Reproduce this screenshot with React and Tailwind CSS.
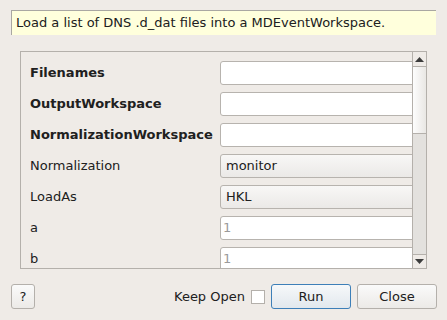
import React from "react";

const font = { fontFamily: '"DejaVu Sans", "Noto Sans", sans-serif' };

function Row({ label, bold, children }) {
  return (
    <div className="flex items-center h-[24px]">
      <div className={`w-[190px] shrink-0 text-[13px] text-[#202020] ${bold ? "font-bold" : ""}`}>{label}</div>
      <div className="flex-1 h-[24px]">{children}</div>
    </div>
  );
}

function Input({ value, placeholder }) {
  return (
    <div className="h-[24px] w-[200px] rounded-[3px] border border-[#b7b3ae] bg-white flex items-center pl-[2px] text-[13px]">
      {placeholder ? <span className="text-[#9a9a9a]">{placeholder}</span> : value}
    </div>
  );
}

function Combo({ value }) {
  return (
    <div className="h-[24px] w-[200px] rounded-[3px] border border-[#b7b3ae] bg-gradient-to-b from-[#f8f7f6] to-[#ebe9e7] flex items-center pl-[5px] text-[13px] text-[#202020]">
      {value}
    </div>
  );
}

export default function App() {
  return (
    <div style={font} className="w-[447px] h-[320px] bg-[#efebe7] flex flex-col text-[#202020] overflow-hidden">
      <div className="mt-[10px] ml-[11px] w-[425px] h-[25px] bg-[#ffffdc] border-l border-t border-[#a9a7a2] flex items-center pl-[4px] text-[13px]">
        Load a list of DNS .d_dat files into a MDEventWorkspace.
      </div>
      <div className="mt-[16px] ml-[20px] w-[407px] h-[218px] border border-[#b4b0ab] flex">
        <div className="flex-1 overflow-hidden pl-[9px] pt-[9px] flex flex-col gap-[7px]">
          <Row label="Filenames" bold><Input /></Row>
          <Row label="OutputWorkspace" bold><Input /></Row>
          <Row label="NormalizationWorkspace" bold><Input /></Row>
          <Row label="Normalization"><Combo value="monitor" /></Row>
          <Row label="LoadAs"><Combo value="HKL" /></Row>
          <Row label="a"><Input placeholder="1" /></Row>
          <Row label="b"><Input placeholder="1" /></Row>
        </div>
        <div className="w-[14px] shrink-0 border-l border-[#b4b0ab] flex flex-col bg-[#e3e1de]">
          <div className="h-[14px] flex items-center justify-center bg-[#efebe7]">
            <svg width="9" height="5" viewBox="0 0 9 5"><path d="M4.5 0L9 5H0z" fill="#3c3c3c" /></svg>
          </div>
          <div className="h-[68px] border-t border-b border-[#b4b0ab] bg-gradient-to-r from-[#fdfdfd] to-[#e9e7e4]" />
          <div className="flex-1" />
          <div className="h-[14px] border-t border-[#b4b0ab] flex items-center justify-center bg-[#efebe7]">
            <svg width="9" height="5" viewBox="0 0 9 5"><path d="M0 0H9L4.5 5z" fill="#3c3c3c" /></svg>
          </div>
        </div>
      </div>
      <div className="mt-[15px] flex items-center h-[25px]">
        <div className="ml-[11px] w-[24px] h-[25px] rounded-[3px] border border-[#b4b0ab] bg-gradient-to-b from-[#fafafa] to-[#eceae7] flex items-center justify-center text-[13px]">?</div>
        <div className="ml-[139px] text-[13px]">Keep Open</div>
        <div className="ml-[6px] w-[14px] h-[14px] border border-[#b4b0ab] bg-white" />
        <div className="ml-[6px] w-[80px] h-[25px] rounded-[3px] border border-[#3d7fb8] bg-gradient-to-b from-[#f6f8fa] to-[#e2e8ed] flex items-center justify-center text-[13px]">Run</div>
        <div className="ml-[6px] w-[80px] h-[25px] rounded-[3px] border border-[#b4b0ab] bg-gradient-to-b from-[#fafafa] to-[#eceae7] flex items-center justify-center text-[13px]">Close</div>
      </div>
    </div>
  );
}
